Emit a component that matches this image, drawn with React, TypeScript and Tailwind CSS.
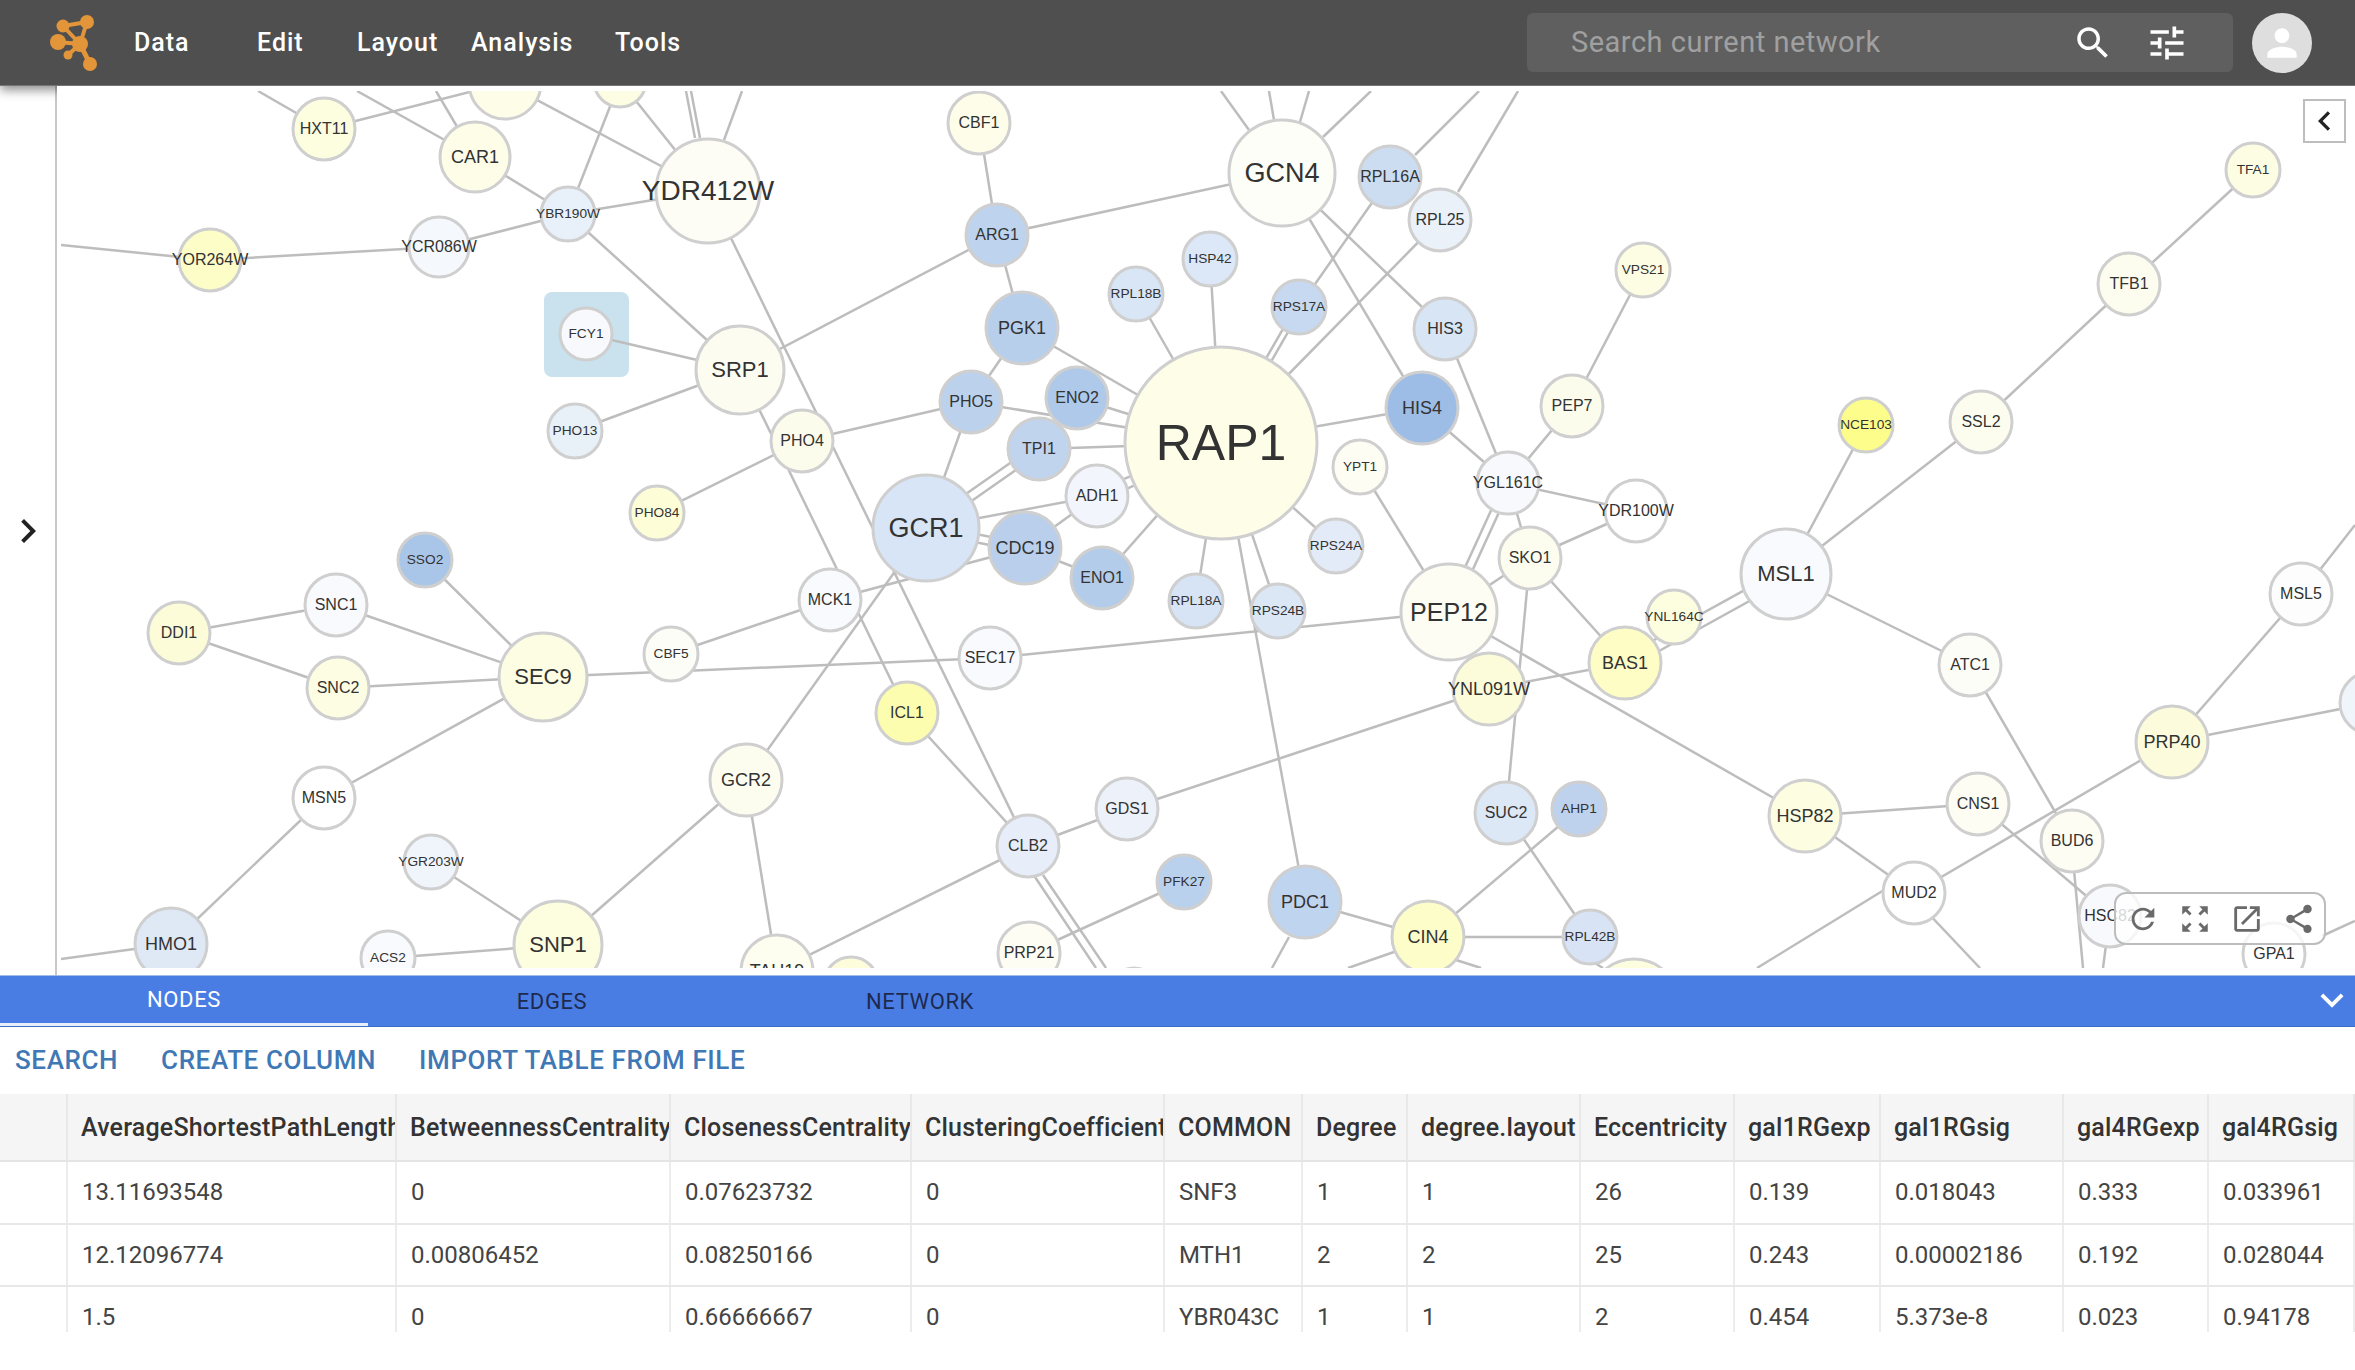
import React from "react";

type N = [string, number, number, number, string];

const nodes: N[] = [
  ["", 505, 83, 36, "#fdfde8"],
  ["", 620, 81, 26, "#fdfde4"],
  ["HXT11", 324, 129, 31, "#fdfddf"],
  ["CAR1", 475, 157, 35, "#fdfde8"],
  ["YDR412W", 708, 191, 52, "#fdfdf5"],
  ["YBR190W", 568, 214, 27, "#e8f0f9"],
  ["YCR086W", 439, 247, 30, "#f5f8fc"],
  ["YOR264W", 210, 260, 31, "#fdfdc8"],
  ["FCY1", 586, 334, 26, "#f8f9fd"],
  ["SRP1", 740, 370, 44, "#fcfcf0"],
  ["PHO13", 575, 431, 27, "#e8f0f8"],
  ["PHO4", 802, 441, 31, "#fcfcec"],
  ["PHO84", 657, 513, 27, "#fdfdd8"],
  ["SSO2", 425, 560, 27, "#a9c6e9"],
  ["SNC1", 336, 605, 31, "#f8fafd"],
  ["DDI1", 179, 633, 31, "#fcfcd8"],
  ["SNC2", 338, 688, 31, "#fdfde4"],
  ["SEC9", 543, 677, 44, "#fdfde4"],
  ["CBF5", 671, 654, 27, "#fdfdf8"],
  ["MSN5", 324, 798, 31, "#ffffff"],
  ["GCR2", 746, 780, 36, "#fdfdef"],
  ["YGR203W", 431, 862, 27, "#f0f4fb"],
  ["SNP1", 558, 945, 44, "#fdfddf"],
  ["HMO1", 171, 944, 36, "#dfe9f6"],
  ["ACS2", 388, 958, 27, "#f8fafd"],
  ["TAU19", 777, 971, 36, "#fdfdf0"],
  ["", 851, 984, 27, "#fdfddc"],
  ["", 1134, 995, 27, "#fdfdf3"],
  ["CBF1", 979, 123, 31, "#fdfdea"],
  ["ARG1", 997, 235, 31, "#bdd3ee"],
  ["PGK1", 1022, 328, 36, "#b8cfec"],
  ["RPL18B", 1136, 294, 27, "#d9e6f6"],
  ["HSP42", 1210, 259, 27, "#dce8f7"],
  ["GCN4", 1282, 173, 53, "#fefef8"],
  ["RPL16A", 1390, 177, 31, "#ccddf1"],
  ["RPL25", 1440, 220, 31, "#eaf1f9"],
  ["RPS17A", 1299, 307, 27, "#c6d9f0"],
  ["HIS3", 1445, 329, 31, "#d8e5f5"],
  ["PHO5", 971, 402, 31, "#bcd1ec"],
  ["ENO2", 1077, 398, 31, "#aec9ea"],
  ["RAP1", 1221, 443, 96, "#fefee8"],
  ["HIS4", 1422, 408, 36, "#9dbde6"],
  ["PEP7", 1572, 406, 31, "#fcfcec"],
  ["TPI1", 1039, 449, 31, "#c0d4ee"],
  ["YPT1", 1360, 467, 27, "#fdfdf3"],
  ["ADH1", 1097, 496, 31, "#f2f6fc"],
  ["YGL161C", 1508, 483, 31, "#f7f9fd"],
  ["GCR1", 926, 528, 53, "#d8e5f6"],
  ["CDC19", 1025, 548, 36, "#b9cfec"],
  ["SKO1", 1530, 558, 31, "#fdfdef"],
  ["RPS24A", 1336, 546, 27, "#e2ebf7"],
  ["ENO1", 1102, 578, 31, "#b3ccea"],
  ["MCK1", 830, 600, 31, "#f8fafd"],
  ["SEC17", 990, 658, 31, "#f8fafd"],
  ["ICL1", 907, 713, 31, "#fdfdb0"],
  ["RPL18A", 1196, 601, 27, "#d7e4f5"],
  ["RPS24B", 1278, 611, 27, "#dce7f6"],
  ["PEP12", 1449, 612, 48, "#fdfdf3"],
  ["YNL091W", 1489, 689, 36, "#fcfcda"],
  ["GDS1", 1127, 809, 31, "#ecf1fa"],
  ["CLB2", 1028, 846, 31, "#e7eef9"],
  ["SUC2", 1506, 813, 31, "#dde8f6"],
  ["AHP1", 1579, 809, 27, "#bed2ee"],
  ["PFK27", 1184, 882, 27, "#bad1ee"],
  ["PDC1", 1305, 902, 36, "#bfd4ef"],
  ["CIN4", 1428, 937, 36, "#fdfdca"],
  ["RPL42B", 1590, 937, 27, "#d8e4f5"],
  ["PRP21", 1029, 953, 31, "#fdfdf3"],
  ["", 1634, 1004, 45, "#fdfddf"],
  ["VPS21", 1643, 270, 27, "#fdfde4"],
  ["NCE103", 1866, 425, 27, "#fdfd8c"],
  ["SSL2", 1981, 422, 31, "#fdfdef"],
  ["TFB1", 2129, 284, 31, "#fdfdef"],
  ["TFA1", 2253, 170, 27, "#fdfde4"],
  ["YDR100W", 1636, 511, 31, "#ffffff"],
  ["MSL1", 1786, 574, 45, "#f8fafd"],
  ["YNL164C", 1674, 617, 27, "#fdfddf"],
  ["BAS1", 1625, 663, 36, "#fdfdc5"],
  ["ATC1", 1970, 665, 31, "#fdfdf8"],
  ["MSL5", 2301, 594, 31, "#fdfdfd"],
  ["PRP40", 2172, 742, 36, "#fcfcdc"],
  ["", 2371, 703, 31, "#f0f4fb"],
  ["HSP82", 1805, 816, 36, "#fdfde2"],
  ["CNS1", 1978, 804, 31, "#fdfdf3"],
  ["BUD6", 2072, 841, 31, "#fdfdf3"],
  ["MUD2", 1914, 893, 31, "#ffffff"],
  ["HSC82", 2110, 916, 31, "#f8f9fd"],
  ["GPA1", 2274, 954, 31, "#ffffff"],
];

const byName: Record<string, N> = {};
nodes.forEach((n) => {
  if (n[0]) byName[n[0]] = n;
});
byName["T1"] = nodes[0];
byName["T2"] = nodes[1];
byName["R1"] = nodes[81];

const edges: [string, string, number?][] = [
  ["HXT11", "T1"], ["T1", "YDR412W"], ["T2", "YDR412W"], ["T2", "YBR190W"],
  ["CAR1", "YBR190W"], ["YBR190W", "YDR412W"], ["YCR086W", "YBR190W"], ["YOR264W", "YCR086W"],
  ["YBR190W", "SRP1"], ["FCY1", "SRP1"], ["PHO13", "SRP1"], ["PHO84", "PHO4"],
  ["YDR412W", "CLB2"], ["SRP1", "ICL1"], ["ICL1", "CLB2"], ["GCR1", "GCR2"],
  ["MCK1", "CDC19"], ["SRP1", "ARG1"], ["ARG1", "CBF1"], ["ARG1", "GCN4"], ["ARG1", "PGK1"],
  ["PGK1", "RAP1"], ["PGK1", "PHO5"], ["PHO5", "GCR1"], ["PHO5", "RAP1"], ["PHO4", "PHO5"],
  ["ENO2", "RAP1"], ["TPI1", "RAP1"], ["TPI1", "GCR1", -4], ["TPI1", "GCR1", 5],
  ["ADH1", "RAP1", -5], ["ADH1", "RAP1", 5], ["ADH1", "GCR1"], ["ADH1", "CDC19"],
  ["GCR1", "CDC19", -4], ["GCR1", "CDC19", 4], ["CDC19", "ENO1"], ["ENO1", "RAP1"],
  ["RPL18B", "RAP1"], ["HSP42", "RAP1"], ["RPS17A", "RAP1", -3], ["RPS17A", "RAP1", 3],
  ["RPL25", "RAP1"], ["RAP1", "HIS4"], ["RAP1", "RPS24A"], ["RAP1", "RPL18A"], ["RAP1", "RPS24B"],
  ["RAP1", "PDC1"], ["RPL16A", "RPS17A"], ["GCN4", "HIS3"], ["GCN4", "HIS4"],
  ["HIS3", "YGL161C"], ["HIS4", "YGL161C"], ["PEP7", "YGL161C"], ["PEP7", "VPS21"],
  ["YPT1", "PEP12"], ["YGL161C", "YDR100W"], ["YGL161C", "PEP12", -4], ["YGL161C", "PEP12", 4],
  ["YGL161C", "SKO1"], ["SKO1", "YDR100W"], ["SKO1", "PEP12"], ["SKO1", "BAS1"], ["SKO1", "SUC2"],
  ["SEC17", "PEP12"], ["SEC9", "SEC17"], ["CBF5", "MCK1"], ["PEP12", "HSP82"],
  ["YNL091W", "BAS1"], ["BAS1", "MSL1", -6], ["BAS1", "MSL1", 6], ["YNL091W", "GDS1"], ["GDS1", "CLB2"],
  ["CLB2", "TAU19"], ["PFK27", "PRP21"], ["PDC1", "CIN4"], ["CIN4", "AHP1"], ["CIN4", "RPL42B"],
  ["SUC2", "RPL42B"], ["GCR2", "SNP1"], ["GCR2", "TAU19"], ["MSN5", "SEC9"], ["MSN5", "HMO1"],
  ["ACS2", "SNP1"], ["YGR203W", "SNP1"], ["SSO2", "SEC9"], ["SNC1", "SEC9"], ["SNC2", "SEC9"],
  ["DDI1", "SNC1"], ["DDI1", "SNC2"], ["MSL1", "NCE103"], ["MSL1", "SSL2"], ["SSL2", "TFB1"],
  ["TFB1", "TFA1"], ["MSL1", "ATC1"], ["ATC1", "BUD6"], ["HSP82", "CNS1"], ["HSP82", "MUD2"],
  ["CNS1", "HSC82"], ["MUD2", "PRP40"], ["PRP40", "MSL5"], ["PRP40", "R1"],
];

const stubs: [number, number, number, number][] = [
  [324, 129, 258, 91], [475, 157, 357, 91], [475, 157, 436, 91],
  [695, 138, 686, 91], [700, 138, 691, 91], [724, 140, 742, 91],
  [1415, 155, 1479, 91], [1458, 192, 1518, 91],
  [1249, 130, 1221, 91], [1274, 120, 1269, 91], [1300, 122, 1309, 91], [1323, 137, 1371, 91],
  [210, 260, 61, 245], [171, 944, 61, 959],
  [1035, 877, 1096, 968], [1043, 875, 1106, 968],
  [1289, 937, 1272, 968], [1394, 952, 1348, 968], [1456, 960, 1481, 968],
  [1590, 960, 1603, 968], [1884, 890, 1757, 968], [1927, 912, 1980, 968],
  [2074, 870, 2083, 968], [2106, 945, 2103, 968], [2301, 594, 2355, 525], [2322, 936, 2355, 921],
];

function fontFor(name: string, r: number) {
  if (r >= 90) return 50;
  if (name === "YDR412W") return 28;
  if (r >= 52) return 27;
  if (r >= 48) return 25;
  if (r >= 44) return 22;
  if (r >= 35) return 18;
  if (r >= 30) return 16;
  return 13.7;
}

function Graph() {
  return (
    <svg viewBox="57 86 2298 889" width="2298" height="889" className="block">
      <defs>
        <clipPath id="canvas-clip">
          <rect x="61" y="91" width="2294" height="877" />
        </clipPath>
      </defs>
      <g clipPath="url(#canvas-clip)">
        <rect x="544" y="292" width="85" height="85" rx="8" fill="#c9e2ed" />
        {edges.map(([a, b, off], i) => {
          const A = byName[a];
          const B = byName[b];
          const dx = B[1] - A[1];
          const dy = B[2] - A[2];
          const l = Math.hypot(dx, dy) || 1;
          const ox = off ? (-dy / l) * off : 0;
          const oy = off ? (dx / l) * off : 0;
          return (
            <line key={i} x1={A[1] + ox} y1={A[2] + oy} x2={B[1] + ox} y2={B[2] + oy} stroke="#bdbdbd" strokeWidth="2.5" />
          );
        })}
        {stubs.map(([x1, y1, x2, y2], i) => (
          <line key={i} x1={x1} y1={y1} x2={x2} y2={y2} stroke="#bdbdbd" strokeWidth="2.5" />
        ))}
        {nodes.map(([name, x, y, r, fill], i) => (
          <g key={i}>
            <circle cx={x} cy={y} r={r} fill={fill} stroke="#cfcfcf" strokeWidth="3" />
            {name && (
              <text
                x={x}
                y={y - 0.5}
                textAnchor="middle"
                dominantBaseline="central"
                fontSize={fontFor(name, r)}
                fill="#333333"
                className="font-['Liberation_Sans',sans-serif]"
              >
                {name}
              </text>
            )}
          </g>
        ))}
      </g>
    </svg>
  );
}

function Mi({ d, className, size = 36 }: { d: string; className?: string; size?: number }) {
  return (
    <svg viewBox="0 0 24 24" width={size} height={size} className={className} fill="currentColor">
      <path d={d} />
    </svg>
  );
}

const cols = "grid grid-cols-[68px_329px_274px_241px_253px_138px_105px_173px_154px_146px_183px_145px_146px]";
const head = ["", "AverageShortestPathLength", "BetweennessCentrality", "ClosenessCentrality", "ClusteringCoefficient", "COMMON", "Degree", "degree.layout", "Eccentricity", "gal1RGexp", "gal1RGsig", "gal4RGexp", "gal4RGsig"];
const rows = [
  ["", "13.11693548", "0", "0.07623732", "0", "SNF3", "1", "1", "26", "0.139", "0.018043", "0.333", "0.033961"],
  ["", "12.12096774", "0.00806452", "0.08250166", "0", "MTH1", "2", "2", "25", "0.243", "0.00002186", "0.192", "0.028044"],
  ["", "1.5", "0", "0.66666667", "0", "YBR043C", "1", "1", "2", "0.454", "5.373e-8", "0.023", "0.94178"],
];

export default function App() {
  return (
    <div className="flex h-[1370px] w-[2355px] flex-col overflow-hidden bg-white font-['Roboto',sans-serif]">
      <header className="relative z-10 flex h-[86px] shrink-0 items-center border-b border-[#757575] bg-[#4f4f4f] shadow-[0_4px_10px_rgba(0,0,0,0.45)]">
        <svg viewBox="46 8 56 68" width="56" height="68" className="ml-[46px] shrink-0" fill="#e3953a" stroke="#e3953a">
          <g strokeWidth="4">
            <line x1="63" y1="25" x2="87" y2="21" />
            <line x1="87" y1="21" x2="80" y2="43" />
            <line x1="63" y1="25" x2="80" y2="43" />
            <line x1="58" y1="41" x2="80" y2="43" />
            <line x1="68" y1="54" x2="80" y2="43" />
            <line x1="80" y1="43" x2="90" y2="63" strokeWidth="5" />
          </g>
          <g stroke="none">
            <circle cx="63" cy="25" r="6.5" />
            <circle cx="87" cy="21" r="7" />
            <circle cx="58" cy="41" r="8" />
            <circle cx="80" cy="43" r="8" />
            <circle cx="68" cy="54" r="4.5" />
            <circle cx="90" cy="63" r="7" />
          </g>
        </svg>
        <nav className="ml-[32px] flex text-[25px] font-medium tracking-[1px] text-white">
          <span className="w-[123px]">Data</span>
          <span className="w-[100px]">Edit</span>
          <span className="w-[114px]">Layout</span>
          <span className="w-[144px]">Analysis</span>
          <span>Tools</span>
        </nav>
        <div className="ml-auto flex h-[59px] w-[706px] items-center rounded-[6px] bg-[#5f5f5f] pl-[44px] pr-[44px] text-white">
          <span className="flex-1 text-[29px] tracking-[0.5px] text-[#a0a0a0]">Search current network</span>
          <Mi size={42} d="M15.5 14h-.79l-.28-.27C15.41 12.59 16 11.11 16 9.5 16 5.91 13.09 3 9.5 3S3 5.91 3 9.5 5.91 16 9.5 16c1.61 0 3.09-.59 4.23-1.57l.27.28v.79l5 4.99L20.49 19l-4.99-5zm-6 0C7.01 14 5 11.99 5 9.5S7.01 5 9.5 5 14 7.01 14 9.5 11.99 14 9.5 14z" />
          <Mi size={44} className="ml-[31px]" d="M3 17v2h6v-2H3zM3 5v2h10V5H3zm10 16v-2h8v-2h-8v-2h-2v6h2zM7 9v2H3v2h4v2h2V9H7zm14 4v-2H11v2h10zm-6-4h2V7h4V5h-4V3h-2v6z" />
        </div>
        <div className="ml-[19px] mr-[43px] flex h-[60px] w-[60px] items-center justify-center rounded-full bg-[#dedede] text-white">
          <Mi size={44} d="M12 12c2.21 0 4-1.79 4-4s-1.79-4-4-4-4 1.79-4 4 1.79 4 4 4zm0 2c-2.67 0-8 1.34-8 4v2h16v-2c0-2.66-5.33-4-8-4z" />
        </div>
      </header>

      <main className="flex h-[889px] shrink-0">
        <aside className="flex w-[57px] shrink-0 items-center justify-center border-r-2 border-[#c8c8c8] text-[#222]">
          <Mi size={48} d="M10 6L8.59 7.41 13.17 12l-4.58 4.59L10 18l6-6z" />
        </aside>
        <section className="relative z-20 flex-1 overflow-hidden bg-white">
          <Graph />
          <button className="absolute right-[9px] top-[13px] flex h-[44px] w-[43px] items-center justify-center border-2 border-[#bdbdbd] bg-white text-[#222]">
            <Mi size={44} d="M15.41 7.41L14 6l-6 6 6 6 1.41-1.41L10.83 12z" />
          </button>
          <div className="absolute bottom-[30px] right-[29px] flex h-[53px] w-[212px] items-center justify-between rounded-[12px] border-2 border-[#bdbdbd] bg-white/80 pl-[10px] pr-[8px] text-[#6a6a6a]">
            <Mi size={34} d="M17.65 6.35C16.2 4.9 14.21 4 12 4c-4.42 0-7.99 3.58-7.99 8s3.57 8 7.99 8c3.73 0 6.84-2.55 7.73-6h-2.08c-.82 2.33-3.04 4-5.65 4-3.31 0-6-2.69-6-6s2.69-6 6-6c1.66 0 3.14.69 4.22 1.78L13 11h7V4l-2.35 2.35z" />
            <Mi size={34} d="M15 3l2.3 2.3-2.89 2.87 1.42 1.42L18.7 6.7 21 9V3zM3 9l2.3-2.3 2.87 2.89 1.42-1.42L6.7 5.3 9 3H3zm6 12l-2.3-2.3 2.89-2.87-1.42-1.42L5.3 17.3 3 15v6zm12-6l-2.3 2.3-2.87-2.89-1.42 1.42 2.89 2.87L15 21h6z" />
            <Mi size={34} d="M19 19H5V5h7V3H5c-1.11 0-2 .9-2 2v14c0 1.1.89 2 2 2h14c1.1 0 2-.9 2-2v-7h-2v7zM14 3v2h3.59l-9.83 9.83 1.41 1.41L19 6.41V10h2V3h-7z" />
            <Mi size={34} d="M18 16.08c-.76 0-1.44.3-1.96.77L8.91 12.7c.05-.23.09-.46.09-.7s-.04-.47-.09-.7l7.05-4.11c.54.5 1.25.81 2.04.81 1.66 0 3-1.34 3-3s-1.34-3-3-3-3 1.34-3 3c0 .24.04.47.09.7L8.04 9.81C7.5 9.31 6.79 9 6 9c-1.66 0-3 1.34-3 3s1.34 3 3 3c.79 0 1.5-.31 2.04-.81l7.12 4.16c-.05.21-.08.43-.08.65 0 1.61 1.31 2.92 2.92 2.92 1.61 0 2.92-1.31 2.92-2.92s-1.31-2.92-2.92-2.92z" />
          </div>
        </section>
      </main>

      <section className="relative z-30 flex h-[52px] shrink-0 border-y border-t-[#a3bbe8] border-b-[#3e6dc4] bg-[#4a7de3] text-[22px] tracking-[0.6px]">
        <div className="flex w-[368px] items-center justify-center border-b-[3px] border-[#e8eefb] text-white">NODES</div>
        <div className="flex w-[368px] items-center justify-center text-[#1d2a4d]">EDGES</div>
        <div className="flex w-[368px] items-center justify-center text-[#1d2a4d]">NETWORK</div>
        <Mi size={46} className="ml-auto mr-[0px] mt-[1px] text-white" d="M16.59 8.59L12 13.17 7.41 8.59 6 10l6 6 6-6z" />
      </section>

      <div className="flex h-[67px] shrink-0 items-center gap-[43px] pl-[15px] text-[26px] font-medium tracking-[0.6px] text-[#3f78b5]">
        <span>SEARCH</span>
        <span>CREATE COLUMN</span>
        <span>IMPORT TABLE FROM FILE</span>
      </div>

      <div className="h-[238px] shrink-0 overflow-hidden text-[24px] text-[#444]">
        <div className={`${cols} h-[68px] border-b-2 border-[#e4e4e4] bg-[#f5f5f5] text-[25px] font-medium tracking-[0.2px] text-[#333]`}>
          {head.map((h, i) => (
            <div key={i} className="flex items-center overflow-hidden whitespace-nowrap border-r-2 border-[#e8e8e8] pl-[13px] pt-[1px]">
              {h}
            </div>
          ))}
        </div>
        {rows.map((r, i) => (
          <div key={i} className={`${cols} h-[62.5px] border-b-2 border-[#e8e8e8]`}>
            {r.map((c, j) => (
              <div key={j} className="flex items-center overflow-hidden whitespace-nowrap border-r-2 border-[#ececec] pl-[14px]">
                {c}
              </div>
            ))}
          </div>
        ))}
      </div>
    </div>
  );
}
